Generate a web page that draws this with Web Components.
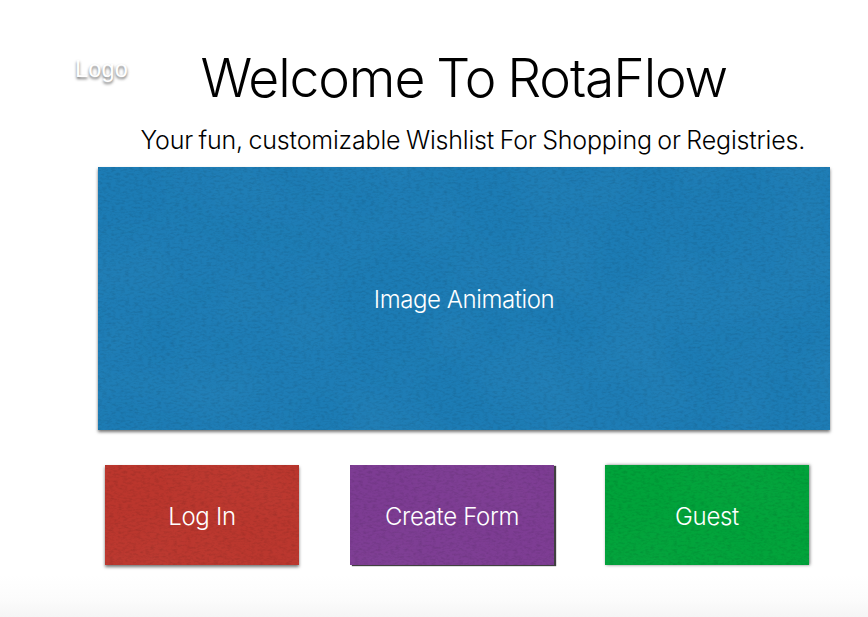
<!DOCTYPE html>
<html lang="en">
<head>
<meta charset="utf-8">
<title>RotaFlow</title>
<style>
  body { margin: 0; }
</style>
</head>
<body>
<welcome-page>
  <site-logo slot="logo">Logo</site-logo>
  <span slot="title">Welcome To RotaFlow</span>
  <span slot="tagline">Your fun, customizable Wishlist For Shopping or Registries.</span>
  <paper-card slot="hero" style="--paper:#1c7cb5;--w:732px;--h:263px;--track:-.42px;--drop:2px;--shadow:0 2px 3px rgba(0,0,0,.55)">Image Animation</paper-card>
  <paper-card slot="action" style="--paper:#bb362d;--w:194px;--h:100px;--track:-.3px;--drop:3px;--shadow:0 2px 3px rgba(0,0,0,.55)">Log In</paper-card>
  <paper-card slot="action" style="--paper:#7d3c93;--w:204px;--h:100px;--track:-.35px;--drop:3px;--shadow:2px 1px 1px rgba(0,0,0,.75)">Create Form</paper-card>
  <paper-card slot="action" style="--paper:#00a33a;--w:204px;--h:100px;--track:-.3px;--drop:3px;--shadow:1px 0 3px rgba(0,0,0,.5)">Guest</paper-card>
</welcome-page>

<script>
class WelcomePage extends HTMLElement {
  constructor() {
    super();
    this.attachShadow({ mode: 'open' }).innerHTML = `
      <style>
        :host {
          display: flex; flex-direction: column; box-sizing: border-box;
          width: 868px; height: 617px; overflow: hidden; color: #000;
          background: linear-gradient(#fff 575px, #fcfcfc 598px, #f5f5f5 617px);
          font-family: Inter, "Liberation Sans", sans-serif; font-weight: 300;
          white-space: nowrap;
        }
        header { display: flex; align-items: flex-start; height: 119px; padding-left: 75px; box-sizing: border-box; }
        .logo { width: 125.5px; padding-top: 55px; }
        h1 { margin: 0; padding-top: 45px; font-size: 53.5px; line-height: 66px; font-weight: 300; letter-spacing: -1.15px; word-spacing: -2px; }
        .tagline { margin: 0; height: 48px; padding-left: 140.5px; box-sizing: border-box;
          font-size: 25px; line-height: 43px; letter-spacing: -.18px; word-spacing: -1.3px; }
        .hero { padding-left: 98px; }
        .actions { display: grid; grid-template-columns: 245px 255px 204px; padding: 35px 0 0 105px; }
      </style>
      <header>
        <div class="logo"><slot name="logo"></slot></div>
        <h1><slot name="title"></slot></h1>
      </header>
      <p class="tagline"><slot name="tagline"></slot></p>
      <div class="hero"><slot name="hero"></slot></div>
      <div class="actions"><slot name="action"></slot></div>`;
  }
}

class SiteLogo extends HTMLElement {
  constructor() {
    super();
    this.attachShadow({ mode: 'open' }).innerHTML = `
      <style>
        :host {
          display: block; color: #fff; font-family: "Liberation Sans", sans-serif;
          font-weight: 400; font-size: 23.5px; line-height: 28px; letter-spacing: .2px;
          text-shadow: 0 2px 3px rgba(0,0,0,.6);
        }
      </style>
      <slot></slot>`;
  }
}

/* Coloured card with a fine paper grain behind its centred label. */
class PaperCard extends HTMLElement {
  constructor() {
    super();
    this.attachShadow({ mode: 'open' }).innerHTML = `
      <style>
        :host {
          display: grid; place-items: center; width: var(--w); height: var(--h);
          background: var(--paper); color: #fff; box-shadow: var(--shadow);
          font-size: 24px; line-height: 30px; letter-spacing: var(--track);
        }
        svg, .label { grid-area: 1 / 1; }
        svg { display: block; width: var(--w); height: var(--h); }
        .label { z-index: 1; padding-top: var(--drop, 1px); }
      </style>
      <svg aria-hidden="true">
        <filter id="grain" x="0" y="0" width="100%" height="100%" color-interpolation-filters="sRGB">
          <feTurbulence type="fractalNoise" baseFrequency=".22 .45" numOctaves="3" seed="4"/>
          <feColorMatrix values="0 0 0 0 0  0 0 0 0 0  0 0 0 0 0  .22 0 0 0 -.09"/>
        </filter>
        <filter id="mottle" x="0" y="0" width="100%" height="100%" color-interpolation-filters="sRGB">
          <feTurbulence type="fractalNoise" baseFrequency=".012" numOctaves="2" seed="9"/>
          <feColorMatrix values="0 0 0 0 1  0 0 0 0 1  0 0 0 0 1  .05 0 0 0 -.018"/>
        </filter>
        <rect width="100%" height="100%" filter="url(#grain)"/>
        <rect width="100%" height="100%" filter="url(#mottle)"/>
      </svg>
      <span class="label"><slot></slot></span>`;
  }
}

customElements.define('welcome-page', WelcomePage);
customElements.define('site-logo', SiteLogo);
customElements.define('paper-card', PaperCard);
</script>
</body>
</html>
